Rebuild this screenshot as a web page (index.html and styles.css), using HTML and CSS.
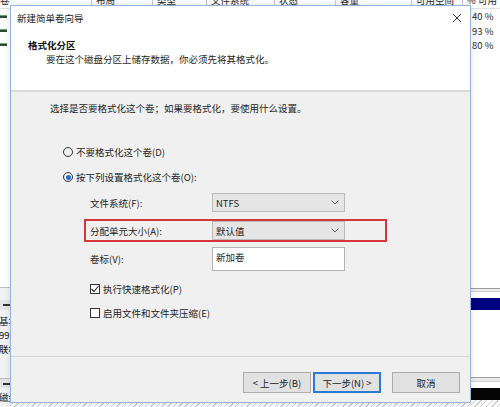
FILE: index.html
```html
<!DOCTYPE html>
<html lang="zh-CN">
<head>
    <meta charset="UTF-8">
    <meta name="viewport" content="width=device-width, initial-scale=1.0">
    <title>新建简单卷向导</title>
    <link rel="stylesheet" href="styles.css">
</head>
<body>
    <div class="screen">
        <!-- disk management list behind the wizard -->
        <div class="columns">
            <div class="col"><span>卷</span></div>
            <div class="col"><span>布局</span></div>
            <div class="col"><span>类型</span></div>
            <div class="col"><span>文件系统</span></div>
            <div class="col"><span>状态</span></div>
            <div class="col"><span>容量</span></div>
            <div class="col"><span>可用空间</span></div>
            <div class="col"><span>% 可用</span></div>
        </div>
        <div class="desk">
            <div class="left-strip">
                <div class="vol-row"><i class="vol-icon"></i></div>
                <div class="vol-row"><i class="vol-icon"></i></div>
                <div class="vol-row"><i class="vol-icon"></i></div>
                <div class="disk-area">
                    <div class="disk-head"><i class="disk-icon"></i></div>
                    <div class="disk-info">基本<br>99<br>联机</div>
                    <div class="disk-head next"><i class="disk-icon"></i></div>
                    <div class="disk-info cut">磁盘</div>
                </div>
            </div>
            <div class="middle"><div class="hatch"></div></div>
            <div class="right-strip">
                <div class="pct">40 %</div>
                <div class="pct">93 %</div>
                <div class="pct">80 %</div>
                <div class="bars">
                    <div class="rule"></div>
                    <div class="navy"></div>
                    <div class="rule low"></div>
                    <div class="black"></div>
                    <div class="hatch"></div>
                </div>
            </div>
        </div>

        <div class="wizard">
            <div class="head">
                <div class="titlebar">
                    <span class="title">新建简单卷向导</span>
                    <svg class="close" width="10" height="10" viewBox="0 0 10 10">
                        <path d="M1 1 L9 9 M9 1 L1 9" stroke="#333" stroke-width="1" fill="none"/>
                    </svg>
                </div>
                <div class="heading">格式化分区</div>
                <div class="subtitle">要在这个磁盘分区上储存数据，你必须先将其格式化。</div>
            </div>
            <div class="content">
                <p class="intro">选择是否要格式化这个卷；如果要格式化，要使用什么设置。</p>
                <label class="choice first"><i class="radio"></i>不要格式化这个卷(D)</label>
                <label class="choice"><i class="radio on"></i>按下列设置格式化这个卷(O):</label>
                <div class="fields">
                    <div class="field">
                        <span>文件系统(F):</span>
                        <div class="select">NTFS
                            <svg class="chevron" width="8" height="5" viewBox="0 0 8 5"><path d="M0.5 0.5 L4 4 L7.5 0.5" stroke="#666" fill="none"/></svg>
                        </div>
                    </div>
                    <div class="field marked">
                        <span>分配单元大小(A):</span>
                        <div class="select">默认值
                            <svg class="chevron" width="8" height="5" viewBox="0 0 8 5"><path d="M0.5 0.5 L4 4 L7.5 0.5" stroke="#666" fill="none"/></svg>
                        </div>
                    </div>
                    <div class="field">
                        <span>卷标(V):</span>
                        <div class="textbox">新加卷</div>
                    </div>
                </div>
                <label class="check first"><i class="box"><svg width="10" height="10" viewBox="0 0 10 10"><path d="M1.5 5 L4 7.5 L8.5 2" stroke="#222" stroke-width="1.1" fill="none"/></svg></i>执行快速格式化(P)</label>
                <label class="check"><i class="box"></i>启用文件和文件夹压缩(E)</label>
            </div>
            <div class="foot">
                <button class="btn">&lt; 上一步(B)</button>
                <button class="btn default">下一步(N) &gt;</button>
                <button class="btn cancel">取消</button>
            </div>
        </div>
    </div>
</body>
</html>
```

FILE: styles.css
```css
* {
    box-sizing: border-box;
}
body {
    margin: 0;
    background: #fff;
    font-family: "Noto Sans CJK SC", "Noto Sans", sans-serif;
    font-size: 9.5px;
    color: #1e1e1e;
}
.screen {
    position: relative;
    width: 500px;
    height: 407px;
    overflow: hidden;
    background: #fff;
}

/* list header behind */
.columns {
    display: grid;
    grid-template-columns: 92px 61px 54px 68px 61px 76px 51px 37px;
    height: 9px;
    overflow: hidden;
    border-bottom: 1px solid #e2e2e2;
}
.col {
    border-right: 1px solid #c9c9c9;
    padding-left: 4px;
    overflow: hidden;
    white-space: nowrap;
}
.col:first-child {
    padding-left: 0;
}
.col:last-child {
    border-right: none;
    padding-left: 4px;
}
.col span {
    display: block;
    line-height: 10px;
    margin-top: -5px;
}
.desk {
    display: grid;
    grid-template-columns: 10px 1fr 29px;
    height: 398px;
}
.left-strip {
    display: flex;
    flex-direction: column;
    overflow: hidden;
}
.vol-row {
    height: 14px;
    display: flex;
    align-items: center;
}
.vol-icon {
    display: block;
    width: 7px;
    height: 3px;
    background: #2f4a36;
    border-top: 1px solid #6aa36f;
}
.disk-area {
    margin-top: auto;
    height: 120px;
    background: #f2f2f2;
    border-top: 1px solid #bdbdbd;
    display: flex;
    flex-direction: column;
}
.disk-head {
    height: 10px;
    margin-top: 12px;
    display: flex;
    align-items: center;
    justify-content: flex-end;
    background: #e4e4e4;
}
.disk-head.next {
    margin-top: 22px;
    border-top: 1px solid #bdbdbd;
}
.disk-icon {
    display: block;
    width: 7px;
    height: 2px;
    background: #333;
}
.disk-info {
    line-height: 14px;
    margin-top: 4px;
    margin-left: -1px;
    white-space: nowrap;
    color: #111;
}
.disk-info.cut {
    margin-top: 2px;
}
.middle {
    display: flex;
    flex-direction: column;
    justify-content: flex-end;
}
.hatch {
    height: 6px;
    background: repeating-linear-gradient(135deg, #fff 0 3px, #cfcfcf 3px 4px);
}
.right-strip {
    display: flex;
    flex-direction: column;
    padding-left: 1px;
}
.pct {
    line-height: 14.5px;
    white-space: nowrap;
    color: #2a2a2a;
}
.bars {
    margin-top: auto;
    height: 119px;
    margin-left: -1px;
    display: flex;
    flex-direction: column;
}
.rule {
    height: 4px;
    border-top: 1px solid #9c9c9c;
    border-bottom: 1px solid #cdcdcd;
    background: #ececec;
}
.navy {
    height: 12px;
    margin-top: 6px;
    background: #000080;
}
.rule.low {
    margin-top: 67px;
    height: 5px;
}
.black {
    height: 12px;
    margin-top: 6px;
    background: #050505;
}
.right-strip .hatch {
    height: 7px;
}

/* wizard dialog on top */
.wizard {
    position: absolute;
    left: 10px;
    top: 5px;
    width: 461px;
    height: 398px;
    border: 1px solid #93b5dc;
    background: #f0f0f0;
    display: flex;
    flex-direction: column;
    box-shadow: 0 0 6px rgba(0, 0, 0, 0.12);
}
.head {
    height: 86px;
    background: #fff;
    border-bottom: 2px solid #dadada;
}
.titlebar {
    height: 24px;
    display: flex;
    align-items: center;
    justify-content: space-between;
    padding: 0 8px 0 6px;
}
.title {
    color: #222;
}
.heading {
    margin: 9px 0 0 17px;
    line-height: 13px;
    font-weight: bold;
    color: #111;
}
.subtitle {
    margin-left: 35px;
    line-height: 14px;
}
.content {
    flex: 1;
    display: flex;
    flex-direction: column;
    align-items: flex-start;
}
.intro {
    margin: 10px 0 0 39px;
    line-height: 13px;
}
.choice, .check {
    display: flex;
    align-items: center;
    gap: 3px;
    line-height: 16px;
    margin-top: 9px;
}
.choice {
    margin-left: 52px;
}
.choice.first {
    margin-top: 29px;
}
.radio {
    width: 10px;
    height: 10px;
    border: 1px solid #333;
    border-radius: 50%;
    display: flex;
    align-items: center;
    justify-content: center;
}
.radio.on::after {
    content: "";
    width: 5px;
    height: 5px;
    border-radius: 50%;
    background: #1f6fcf;
}
.fields {
    margin: 6px 0 0 73px;
    width: 303px;
    display: flex;
    flex-direction: column;
    gap: 5px;
}
.field {
    display: grid;
    grid-template-columns: 122px 133px;
    align-items: center;
    padding-left: 4px;
    border: 2px solid transparent;
}
.field:last-child {
    margin-top: -2px;
}
.field.marked {
    border-color: #d8353b;
}
.select {
    height: 19px;
    background: #e5e5e5;
    border: 1px solid #bababa;
    padding-left: 3px;
    display: flex;
    align-items: center;
    justify-content: space-between;
    padding-right: 5px;
}
.textbox {
    height: 24px;
    background: #fff;
    border: 1px solid #b4b4b4;
    padding: 2px 3px;
    line-height: 14px;
}
.check {
    margin-left: 79px;
    gap: 3px;
    margin-top: 8px;
}
.box {
    width: 10px;
    height: 10px;
    border: 1px solid #333;
    background: #fff;
    display: flex;
}
.box svg {
    margin: -1px;
}
.foot {
    height: 46px;
    border-top: 1px solid #d6d6d6;
    display: flex;
    justify-content: flex-end;
    align-items: flex-start;
    padding: 15px 10px 0 0;
}
.btn {
    width: 68px;
    height: 21px;
    font-family: inherit;
    font-size: 9.5px;
    color: #222;
    background: #e1e1e1;
    border: 1px solid #adadad;
    padding: 0;
}
.btn.default {
    margin-left: 2px;
    border-color: #2a7bd3;
    box-shadow: inset 0 0 0 1px #2a7bd3;
}
.btn.cancel {
    margin-left: 11px;
}
```
